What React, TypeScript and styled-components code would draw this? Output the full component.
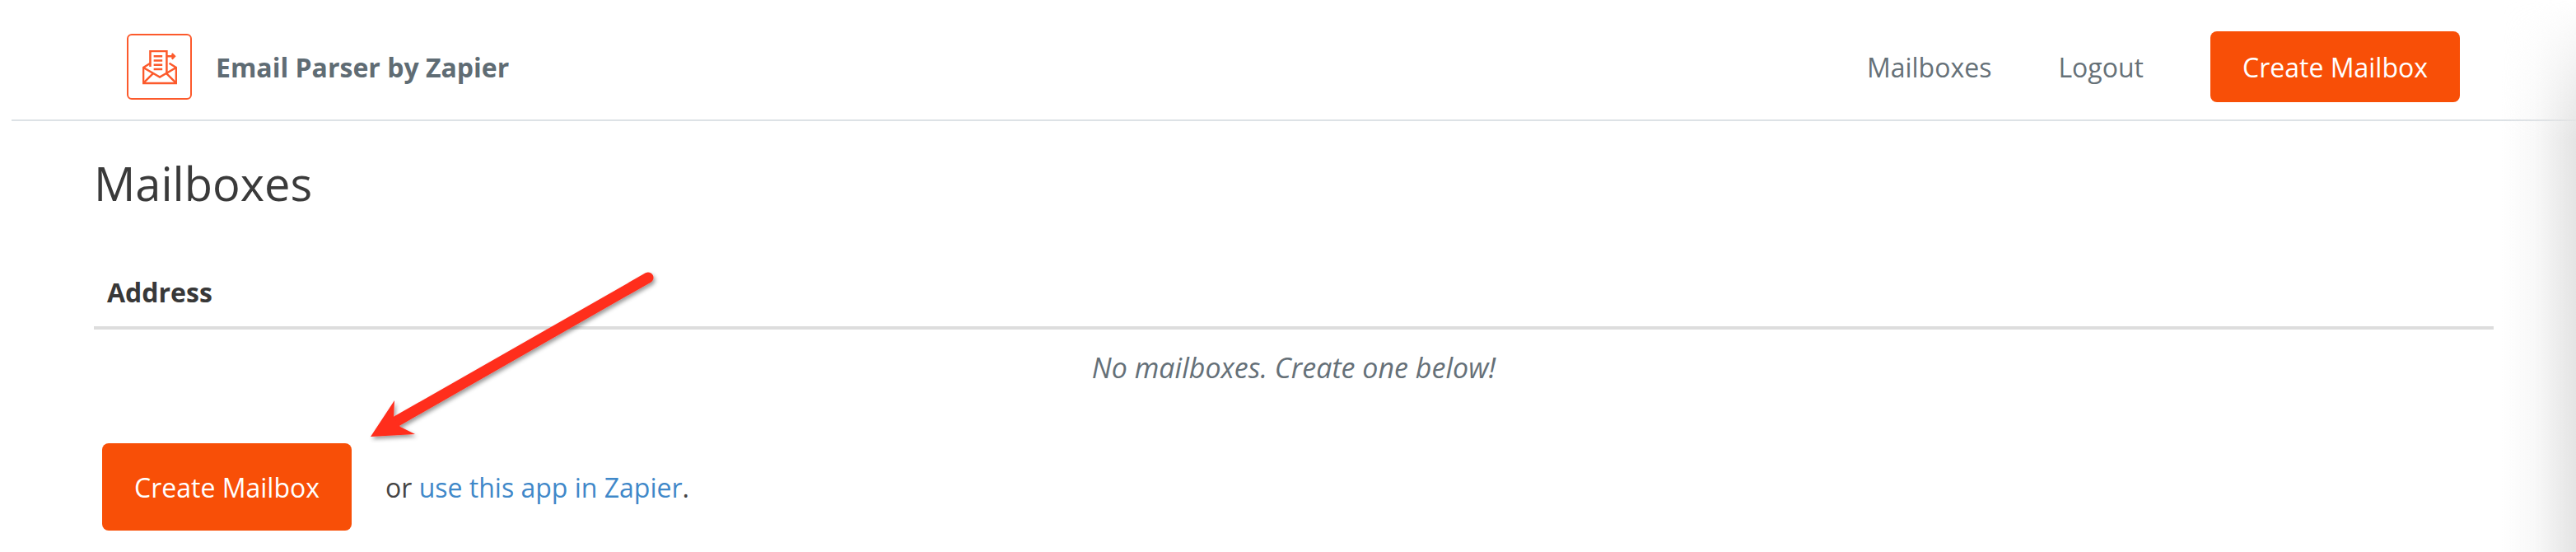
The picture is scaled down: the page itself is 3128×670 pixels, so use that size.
import React from "react";
import styled, { createGlobalStyle } from "styled-components";

const GlobalStyle = createGlobalStyle`
  html, body {
    margin: 0;
    padding: 0;
    background: #fff;
  }
  body {
    font-family: "Open Sans", "Liberation Sans", sans-serif;
    overflow: hidden;
  }
`;

const LogoIcon = () => (
  <svg width="42" height="42" viewBox="0 0 40 40" fill="none" stroke="#fc5a2c" strokeWidth="2.4">
    <path d="M9 19V1h19v26" />
    <path d="M13 7h10M13 12h10M13 17h10M13 22h10" />
    <path d="M28 7h9M34 4l3 3-3 3" />
    <path d="M9 15l-8 5v18h38V20l-8-5" />
    <path d="M1 20l19 11 19-11" />
    <path d="M1 38l12-12M39 38L27 26" />
  </svg>
);

const Arrow = () => (
  <ArrowLayer width="360" height="210" viewBox="440 330 360 210">
    <defs>
      <filter id="arrow-shadow" x="-10%" y="-10%" width="125%" height="125%">
        <feDropShadow dx="2" dy="3" stdDeviation="2.5" floodColor="#000" floodOpacity="0.4" />
      </filter>
    </defs>
    <g filter="url(#arrow-shadow)">
      <path d="M482 511L787 337" stroke="#ff2d1e" strokeWidth="13" strokeLinecap="round" fill="none" />
      <path d="M450 530L479 486L478 507L486 518L504 527Z" fill="#ff2d1e" />
    </g>
  </ArrowLayer>
);

const App: React.FC = () => {
  return (
    <Page>
      <GlobalStyle />
      <Header>
        <Brand>
          <LogoBox>
            <LogoIcon />
          </LogoBox>
          <BrandName>Email Parser by Zapier</BrandName>
        </Brand>
        <Nav>
          <NavLink>Mailboxes</NavLink>
          <NavLink>Logout</NavLink>
          <CreateButton>Create Mailbox</CreateButton>
        </Nav>
      </Header>

      <Content>
        <Title>Mailboxes</Title>
        <TableHead>Address</TableHead>
        <EmptyRow>No mailboxes. Create one below!</EmptyRow>
        <ActionRow>
          <CreateButton>Create Mailbox</CreateButton>
          <Hint>
            or <HintLink>use this app in Zapier</HintLink>.
          </Hint>
        </ActionRow>
      </Content>

      <Arrow />
      <EdgeShadow />
    </Page>
  );
};

export default App;

const Page = styled.div`
  position: relative;
  width: 3128px;
  height: 670px;
  overflow: hidden;
  background: #fff;
`;

const Header = styled.header`
  display: flex;
  align-items: center;
  justify-content: space-between;
  box-sizing: border-box;
  height: 147px;
  margin-left: 14px;
  padding: 17px 141px 0 140px;
  border-bottom: 2px solid #dde2e6;
`;

const Brand = styled.div`
  display: flex;
  align-items: center;
  gap: 29px;
`;

const LogoBox = styled.div`
  display: flex;
  align-items: center;
  justify-content: center;
  box-sizing: border-box;
  width: 79px;
  height: 80px;
  padding-top: 2px;
  border: 2.5px solid #fc5a2c;
  border-radius: 6px;
`;

const BrandName = styled.div`
  color: #5f6c74;
  font-size: 32px;
  font-weight: 700;
`;

const Nav = styled.nav`
  display: flex;
  align-items: center;
`;

const NavLink = styled.a`
  margin-right: 81px;
  color: #667178;
  font-size: 32px;
`;

const CreateButton = styled.div`
  display: flex;
  align-items: center;
  justify-content: center;
  box-sizing: border-box;
  width: 303px;
  height: 86px;
  border-radius: 8px;
  background: #f84f07;
  color: #fff;
  font-size: 32px;
  font-weight: 400;
`;

const Content = styled.main`
  margin: 0 100px 0 114px;
`;

const Title = styled.h1`
  margin: 0;
  padding-top: 39px;
  color: #3a3a3a;
  font-size: 56px;
  font-weight: 400;
  line-height: 72px;
`;

const TableHead = styled.div`
  box-sizing: border-box;
  height: 142px;
  padding: 0 16px 20px;
  display: flex;
  align-items: flex-end;
  border-bottom: 4px solid #dddddd;
  color: #383838;
  font-size: 32px;
  font-weight: 700;
`;

const EmptyRow = styled.div`
  padding-top: 22px;
  color: #657078;
  font-size: 34px;
  font-style: italic;
  line-height: 48px;
  text-align: center;
`;

const ActionRow = styled.div`
  display: flex;
  align-items: center;
  gap: 41px;
  margin-top: 68px;
  padding-left: 10px;

  ${CreateButton} {
    height: 106px;
  }
`;

const Hint = styled.div`
  color: #444;
  font-size: 32px;
`;

const HintLink = styled.a`
  color: #3f88c9;
`;

const ArrowLayer = styled.svg`
  position: absolute;
  left: 440px;
  top: 330px;
  overflow: visible;
`;

const EdgeShadow = styled.div`
  position: absolute;
  top: 0;
  right: 0;
  bottom: 0;
  width: 90px;
  background: linear-gradient(
    to right,
    rgba(228, 228, 228, 0) 0%,
    rgba(228, 228, 228, 0.25) 45%,
    rgba(228, 228, 228, 0.8) 85%,
    #e4e4e4 100%
  );
  mask-image: linear-gradient(to bottom, transparent 0, #000 170px);
  pointer-events: none;
`;
